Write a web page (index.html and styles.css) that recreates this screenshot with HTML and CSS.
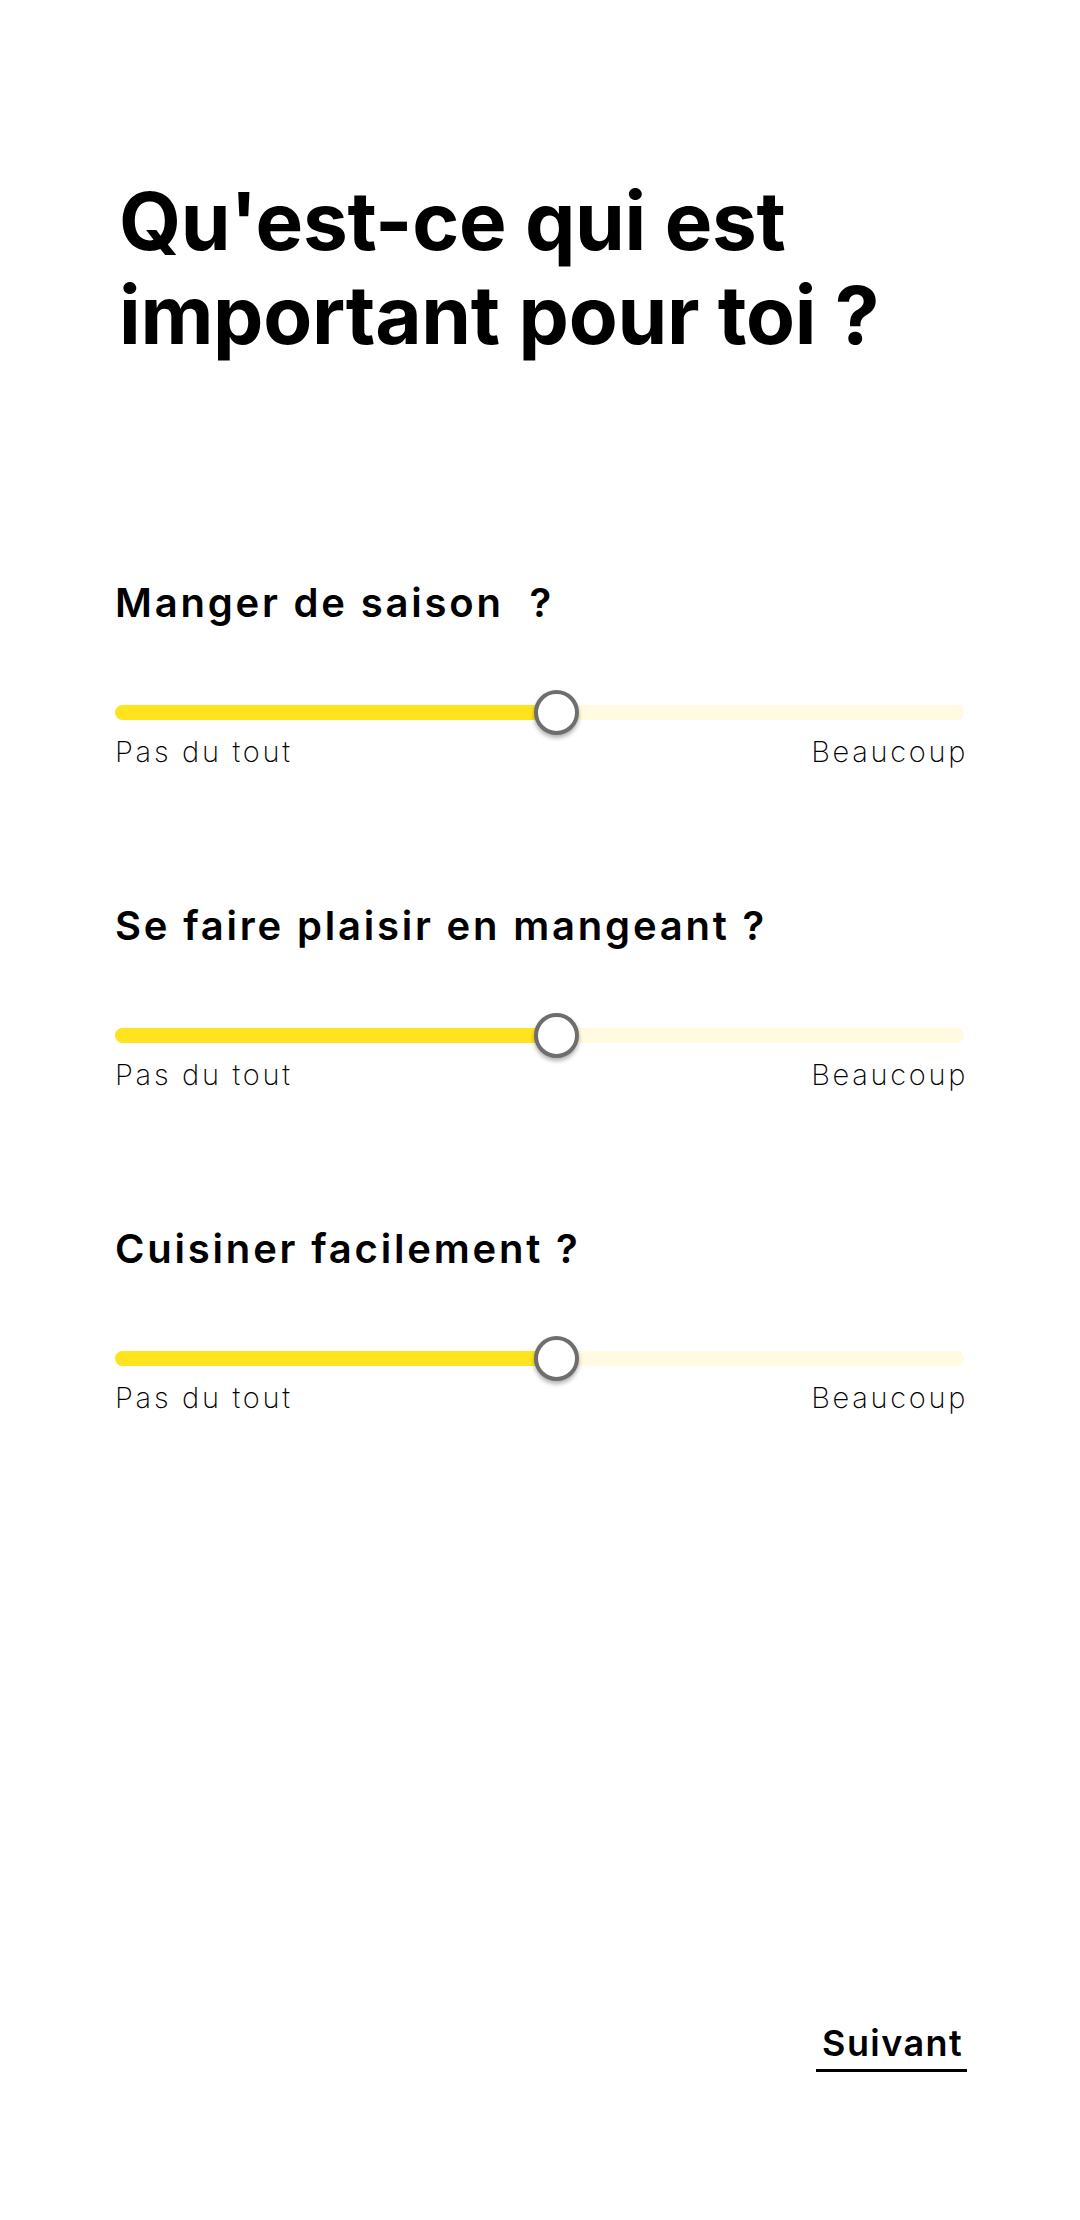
FILE: index.html
```html
<!DOCTYPE html>
<html lang="fr">
<head>
  <meta charset="UTF-8">
  <meta name="viewport" content="width=device-width, initial-scale=1.0">
  <title>Questionnaire</title>
  <link rel="stylesheet" href="styles.css">
</head>
<body>
  <div class="page">
    <h1 class="title">Qu'est-ce qui est<br>important pour toi ?</h1>

    <div class="question">
      <h2>Manger de saison &nbsp;?</h2>
      <div class="slider">
        <div class="fill" style="width: 52%"></div>
        <div class="thumb" style="left: 52%"></div>
      </div>
      <div class="labels">
        <span>Pas du tout</span>
        <span>Beaucoup</span>
      </div>
    </div>

    <div class="question">
      <h2>Se faire plaisir en mangeant ?</h2>
      <div class="slider">
        <div class="fill" style="width: 52%"></div>
        <div class="thumb" style="left: 52%"></div>
      </div>
      <div class="labels">
        <span>Pas du tout</span>
        <span>Beaucoup</span>
      </div>
    </div>

    <div class="question">
      <h2>Cuisiner facilement ?</h2>
      <div class="slider">
        <div class="fill" style="width: 52%"></div>
        <div class="thumb" style="left: 52%"></div>
      </div>
      <div class="labels">
        <span>Pas du tout</span>
        <span>Beaucoup</span>
      </div>
    </div>

    <div class="footer">
      <a class="next" href="#">Suivant</a>
    </div>
  </div>
</body>
</html>
```

FILE: styles.css
```css
body {
  margin: 0;
  background: #ffffff;
  color: #000000;
  font-family: Inter, "Noto Sans", sans-serif;
}
.page {
  min-height: 2220px;
  box-sizing: border-box;
  padding: 174px 116px 148px 115px;
  display: flex;
  flex-direction: column;
}
.title {
  margin: 0 0 0 4px;
  font-size: 80px;
  font-weight: 700;
  line-height: 94px;
  letter-spacing: -0.3px;
}
.title + .question {
  margin-top: 217px;
}
.question + .question {
  margin-top: 132px;
}
h2 {
  margin: 0;
  font-size: 40px;
  font-weight: 600;
  line-height: 48px;
  letter-spacing: 2.8px;
}
.slider {
  position: relative;
  height: 15px;
  margin-top: 78px;
  border-radius: 8px;
  background: #fffae0;
}
.fill {
  height: 100%;
  border-radius: 8px;
  background: #ffe31e;
}
.thumb {
  position: absolute;
  top: 50%;
  width: 37px;
  height: 37px;
  margin: -22.5px 0 0 -22.5px;
  border: 4px solid #6e6e6e;
  border-radius: 50%;
  background: #ffffff;
  box-shadow: 0 3px 4px rgba(0, 0, 0, 0.3);
}
.labels {
  display: flex;
  justify-content: space-between;
  margin: 14px -4px 0 0;
  font-size: 29px;
  font-weight: 200;
  line-height: 36px;
  letter-spacing: 2.7px;
}
.footer {
  margin: auto -3px 0 0;
  display: flex;
  justify-content: flex-end;
}
.next {
  display: inline-block;
  padding: 0 4px 8px 6px;
  border-bottom: 3px solid #000000;
  color: #000000;
  text-decoration: none;
  font-size: 36px;
  font-weight: 600;
  line-height: 36px;
  letter-spacing: 1.4px;
}
```
